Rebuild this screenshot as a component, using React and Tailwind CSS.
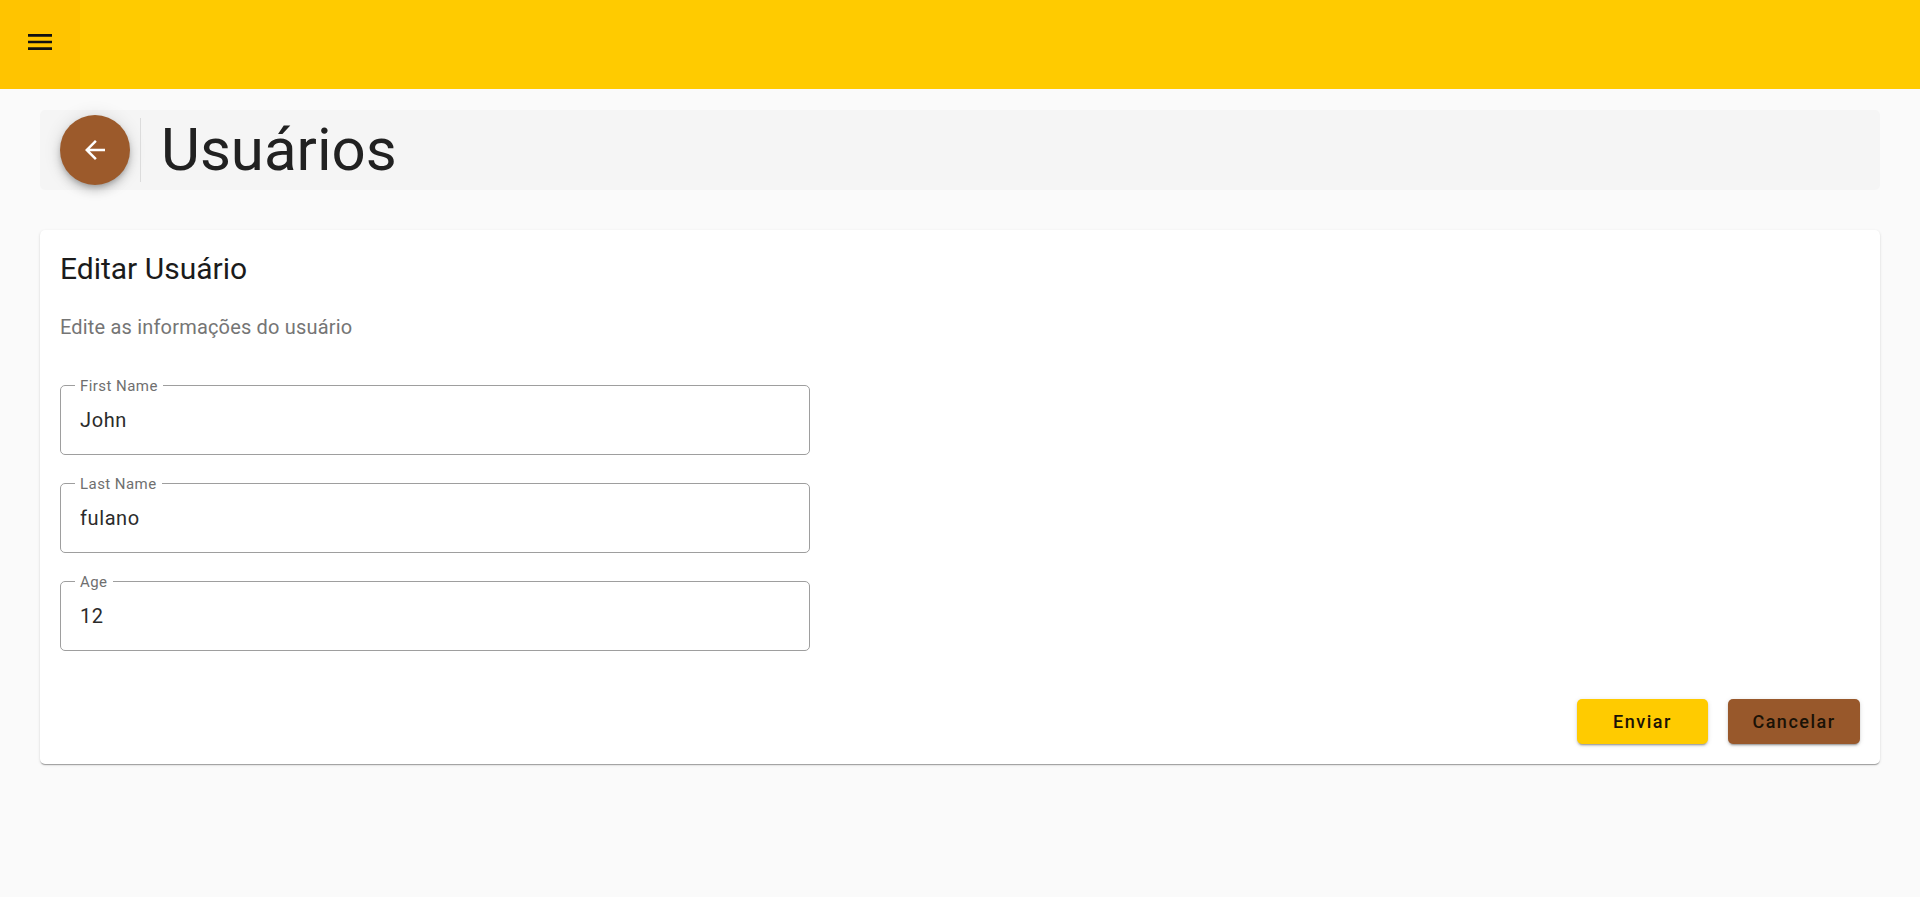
import React from "react";

function Field({ label, value, last }) {
  return (
    <div className={`relative h-[70px] w-[750px] ${last ? "" : "mb-[28px]"}`}>
      <fieldset className="absolute left-0 right-0 bottom-0 top-[-6px] rounded-[5px] border border-[#9e9e9e] px-[14px] m-0 min-w-0">
        <legend className="px-[5px] text-[15px] leading-[14px] h-[12px] text-[#6f6f6f] tracking-[0.45px] font-normal">{label}</legend>
      </fieldset>
      <input
        readOnly
        defaultValue={value}
        className="absolute left-[20px] top-[23px] w-[700px] h-[24px] bg-transparent outline-none text-[20px] leading-[24px] tracking-[0.6px] text-[#2b2b2b]"
      />
    </div>
  );
}

export default function App() {
  return (
    <div className="min-h-[897px] bg-[#fafafa] font-['Roboto',sans-serif]">
      <header className="h-[89px] bg-[#ffcb00] flex">
        <button className="w-[80px] h-[89px] bg-[#ffc400] flex items-center justify-center pb-[6px]">
          <svg width="32" height="32" viewBox="0 0 24 24" fill="#111">
            <path d="M3 18h18v-2H3v2zm0-5h18v-2H3v2zm0-7v2h18V6H3z" />
          </svg>
        </button>
      </header>
      <main className="px-[40px] pt-[21px]">
        <div className="h-[80px] bg-[#f5f5f5] rounded-[5px] flex items-center pl-[20px]">
          <button className="w-[70px] h-[70px] rounded-full bg-[#9c5a2b] flex items-center justify-center shadow-[0_3px_5px_-1px_rgba(0,0,0,0.2),0_6px_10px_0_rgba(0,0,0,0.14),0_1px_18px_0_rgba(0,0,0,0.12)]">
            <svg width="30" height="30" viewBox="0 0 24 24" fill="#fff">
              <path d="M20 11H7.83l5.59-5.59L12 4l-8 8 8 8 1.41-1.41L7.83 13H20v-2z" />
            </svg>
          </button>
          <div className="ml-[10px] w-px h-[64px] bg-[#dcdcdc]" />
          <h1 className="ml-[20px] text-[60px] leading-[72px] font-normal text-[#212121]">Usuários</h1>
        </div>
        <section className="mt-[40px] h-[534px] bg-white rounded-[5px] shadow-[0_2px_1px_-1px_rgba(0,0,0,0.2),0_1px_1px_0_rgba(0,0,0,0.14),0_1px_3px_0_rgba(0,0,0,0.12)] pt-[21px] px-[20px]">
          <h2 className="text-[30px] leading-[36px] font-normal text-[#1b1b1b]">Editar Usuário</h2>
          <p className="mt-[26px] text-[20px] leading-[28px] tracking-[0.18px] text-[#757575]">Edite as informações do usuário</p>
          <div className="mt-[44px]">
            <Field label="First Name" value="John" />
            <Field label="Last Name" value="fulano" />
            <Field label="Age" value="12" last />
          </div>
          <div className="mt-[48px] flex justify-end gap-[20px]">
            <button className="w-[131px] h-[45px] rounded-[5px] bg-[#ffcb00] text-[18px] font-medium tracking-[1.5px] text-[#1a1206] shadow-[0_3px_1px_-2px_rgba(0,0,0,0.2),0_2px_2px_0_rgba(0,0,0,0.14),0_1px_5px_0_rgba(0,0,0,0.12)]">Enviar</button>
            <button className="w-[132px] h-[45px] rounded-[5px] bg-[#98582b] text-[18px] font-medium tracking-[1.5px] text-[#1a1206] shadow-[0_3px_1px_-2px_rgba(0,0,0,0.2),0_2px_2px_0_rgba(0,0,0,0.14),0_1px_5px_0_rgba(0,0,0,0.12)]">Cancelar</button>
          </div>
        </section>
      </main>
    </div>
  );
}
